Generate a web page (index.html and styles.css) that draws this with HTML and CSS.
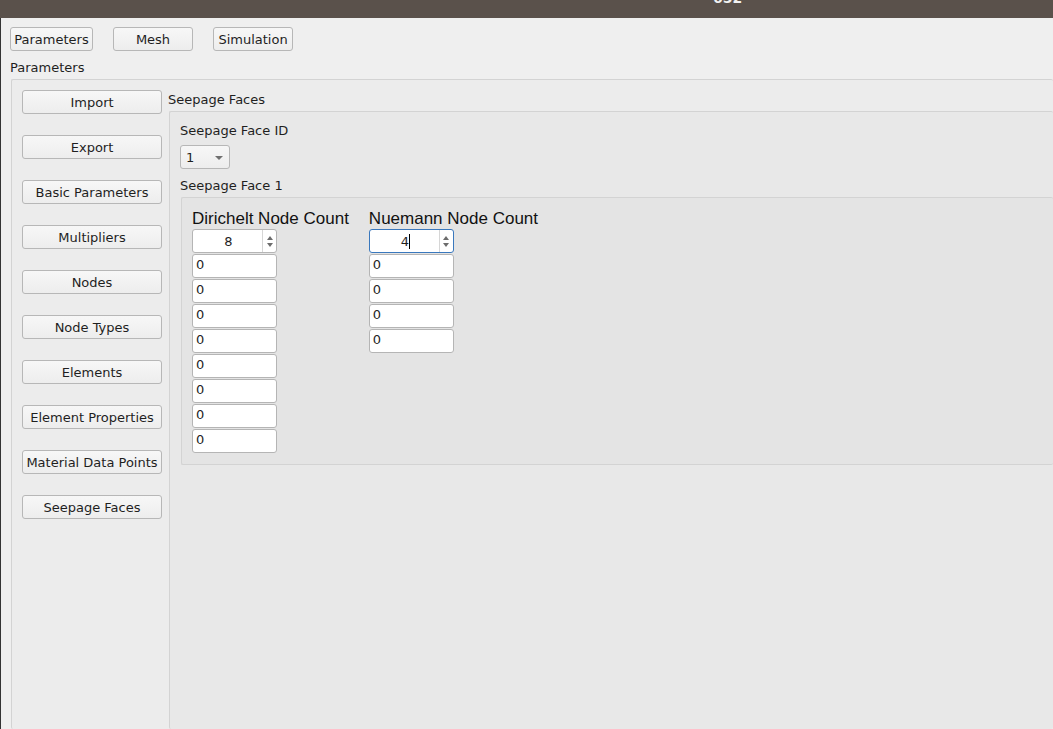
FILE: index.html
```html
<!DOCTYPE html>
<html>
<head>
<meta charset="utf-8">
<link rel="stylesheet" href="styles.css">
</head>
<body>
<div class="titlebar"><span class="title">652</span></div>
<div class="app">
  <div class="tabs">
    <button class="btn tab-params">Parameters</button>
    <button class="btn tab">Mesh</button>
    <button class="btn tab">Simulation</button>
  </div>
  <div class="section-label">Parameters</div>
  <div class="group outer">
    <div class="sidebar">
      <button class="btn side">Import</button>
      <button class="btn side">Export</button>
      <button class="btn side">Basic Parameters</button>
      <button class="btn side">Multipliers</button>
      <button class="btn side">Nodes</button>
      <button class="btn side">Node Types</button>
      <button class="btn side">Elements</button>
      <button class="btn side">Element Properties</button>
      <button class="btn side">Material Data Points</button>
      <button class="btn side">Seepage Faces</button>
    </div>
    <div class="content">
      <div class="label">Seepage Faces</div>
      <div class="group panel">
        <div class="label">Seepage Face ID</div>
        <div class="combo"><span class="combo-val">1</span><span class="combo-arrow"></span></div>
        <div class="label face-label">Seepage Face 1</div>
        <div class="group face">
          <div class="col">
            <div class="col-head">Dirichelt Node Count</div>
            <div class="spin"><span class="spin-val">8</span><span class="spin-btns"><span class="up"></span><span class="down"></span></span></div>
            <div class="field">0</div>
            <div class="field">0</div>
            <div class="field">0</div>
            <div class="field">0</div>
            <div class="field">0</div>
            <div class="field">0</div>
            <div class="field">0</div>
            <div class="field">0</div>
          </div>
          <div class="col">
            <div class="col-head">Nuemann Node Count</div>
            <div class="spin focus"><span class="spin-val">4<span class="caret"></span></span><span class="spin-btns"><span class="up"></span><span class="down"></span></span></div>
            <div class="field">0</div>
            <div class="field">0</div>
            <div class="field">0</div>
            <div class="field">0</div>
          </div>
        </div>
      </div>
    </div>
  </div>
</div>
</body>
</html>
```
FILE: styles.css
```css
* { box-sizing: border-box; }
html, body {
  margin: 0;
  padding: 0;
  width: 1053px;
  height: 729px;
  overflow: hidden;
}
body {
  background: #efefef;
  font-family: "DejaVu Sans", sans-serif;
  font-size: 13px;
  color: #1f1f1f;
  display: flex;
  flex-direction: column;
}
.titlebar {
  height: 18px;
  background: #5a514b;
  overflow: hidden;
  padding-left: 713px;
  flex: none;
}
.title {
  display: block;
  color: #f2f2f2;
  font-size: 14px;
  font-weight: bold;
  line-height: 14px;
  margin-top: -9px;
}
.app {
  flex: 1;
  display: flex;
  flex-direction: column;
  border-left: 1px solid #343434;
  min-height: 0;
}
.tabs {
  display: flex;
  gap: 20px;
  padding: 9px 0 0 9px;
}
.btn {
  font-family: "DejaVu Sans", sans-serif;
  font-size: 13px;
  color: #1f1f1f;
  height: 24px;
  padding: 0;
  background: linear-gradient(#f7f7f7, #ededed);
  border: 1px solid #b7b7b7;
  border-radius: 3px;
  line-height: 24px;
  text-align: center;
}
.tab-params { width: 83px; }
.tab { width: 80px; }
.section-label {
  margin: 9px 0 0 9px;
  line-height: 16px;
}
.group {
  border: 1px solid #d3d3d3;
  border-radius: 2px;
}
.outer {
  margin: 3px 0 0 10px;
  flex: 1;
  display: flex;
  background: #ececec;
  border-right: none;
  border-bottom: none;
  min-height: 0;
}
.sidebar {
  width: 156px;
  flex: none;
  padding: 10px 6px 0 10px;
  display: flex;
  flex-direction: column;
  gap: 21px;
}
.side { width: 140px; }
.content {
  flex: 1;
  display: flex;
  flex-direction: column;
  padding-top: 12px;
  min-width: 0;
}
.label { line-height: 16px; }
.panel {
  margin: 3px 0 0 1px;
  flex: 1;
  background: #e8e8e8;
  border-right: none;
  border-bottom: none;
  padding: 11px 0 0 10px;
}
.combo {
  margin-top: 6px;
  width: 50px;
  height: 24px;
  background: linear-gradient(#f7f7f7, #ededed);
  border: 1px solid #b7b7b7;
  border-radius: 3px;
  display: flex;
  align-items: center;
  padding-left: 5px;
  padding-top: 1px;
}
.combo-val { flex: 1; }
.combo-arrow {
  width: 0;
  height: 0;
  border-left: 4px solid transparent;
  border-right: 4px solid transparent;
  border-top: 4px solid #707070;
  margin-right: 6px;
}
.face-label { margin-top: 9px; }
.face {
  margin: 3px 0 0 1px;
  background: #e4e4e4;
  border-right: none;
  padding: 11px 0 11px 10px;
  display: flex;
  gap: 20px;
  align-items: flex-start;
}
.col {
  display: flex;
  flex-direction: column;
  gap: 1px;
}
.col-head {
  font-family: "Liberation Sans", Arial, sans-serif;
  font-size: 17px;
  line-height: 19px;
  color: #111;
}
.spin, .field {
  width: 85px;
  height: 24px;
  background: #fff;
  border: 1px solid #b5b5b5;
  border-radius: 3px;
}
.spin {
  display: flex;
}
.spin.focus { border-color: #3a78bd; }
.spin-val {
  flex: 1;
  text-align: center;
  line-height: 23px;
  padding-left: 2px;
}
.caret {
  display: inline-block;
  width: 1px;
  height: 15px;
  background: #000;
  vertical-align: -3px;
}
.spin-btns {
  width: 14px;
  border-left: 1px solid #d6d6d6;
  display: flex;
  flex-direction: column;
  align-items: center;
  justify-content: center;
  gap: 3px;
}
.up {
  width: 0;
  height: 0;
  border-left: 3.5px solid transparent;
  border-right: 3.5px solid transparent;
  border-bottom: 4px solid #6c6c6c;
}
.down {
  width: 0;
  height: 0;
  border-left: 3.5px solid transparent;
  border-right: 3.5px solid transparent;
  border-top: 4px solid #6c6c6c;
}
.field {
  padding-left: 3px;
  line-height: 20px;
}
```
